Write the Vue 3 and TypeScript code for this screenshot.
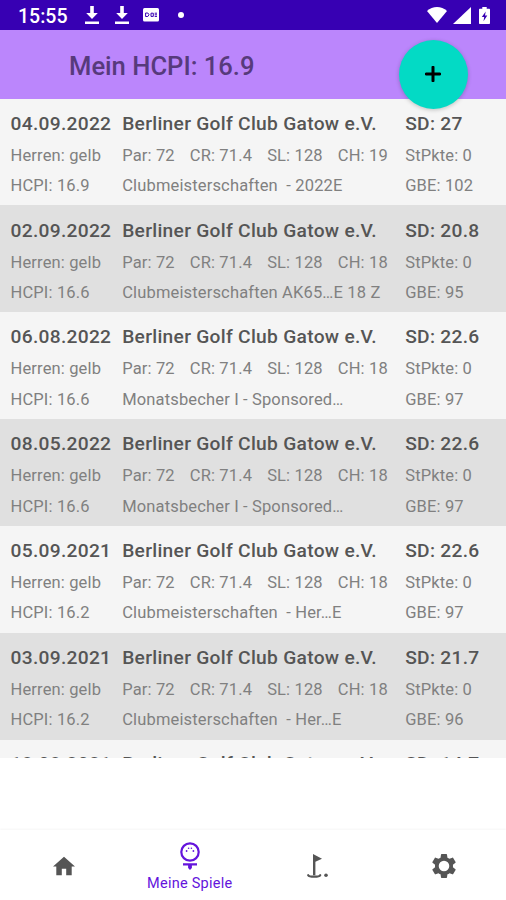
<script setup lang="ts">
interface Game {
  date: string
  hcpi: string
  ch: string
  event: string
  sd: string
  gbe: string
}

const games: Game[] = [
  { date: '04.09.2022', hcpi: '16.9', ch: '19', event: 'Clubmeisterschaften  - 2022E', sd: '27', gbe: '102' },
  { date: '02.09.2022', hcpi: '16.6', ch: '18', event: 'Clubmeisterschaften AK65…E 18 Z', sd: '20.8', gbe: '95' },
  { date: '06.08.2022', hcpi: '16.6', ch: '18', event: 'Monatsbecher I - Sponsored…', sd: '22.6', gbe: '97' },
  { date: '08.05.2022', hcpi: '16.6', ch: '18', event: 'Monatsbecher I - Sponsored…', sd: '22.6', gbe: '97' },
  { date: '05.09.2021', hcpi: '16.2', ch: '18', event: 'Clubmeisterschaften  - Her…E', sd: '22.6', gbe: '97' },
  { date: '03.09.2021', hcpi: '16.2', ch: '18', event: 'Clubmeisterschaften  - Her…E', sd: '21.7', gbe: '96' },
]
const next = { date: '18.08.2021', sd: '14.7' }
</script>

<template>
  <div class="screen">
    <div class="status">
      <span class="clock">15:55</span>
      <svg class="dl" viewBox="0 0 14 18"><path d="M5.2 0h3.6v7h4L7 13 1.2 7h4zM0 15.5h14V18H0z" /></svg>
      <svg class="dl second" viewBox="0 0 14 18"><path d="M5.2 0h3.6v7h4L7 13 1.2 7h4zM0 15.5h14V18H0z" /></svg>
      <svg class="card" viewBox="0 0 16 14">
        <rect width="16" height="13.5" rx="1.5" />
        <path class="cut" d="M2.6 5h2.2l1.2 1.7-1.2 1.8H2.6zM8 5.2h2.3v3.2H8zM11.7 5.2H14M11.7 6.8H14M11.7 8.4H14" />
      </svg>
      <span class="dot"></span>
      <span class="grow"></span>
      <svg class="wifi" viewBox="0 0 20 16"><path d="M0 4C5.5-1.2 14.5-1.2 20 4L10 16z" /></svg>
      <svg class="signal" viewBox="0 0 18 17"><path d="M18 0v17H0z" /></svg>
      <svg class="battery" viewBox="0 0 11 17">
        <path d="M3.3 0h4.4v1.8H10c.6 0 1 .4 1 1V16c0 .6-.4 1-1 1H1c-.6 0-1-.4-1-1V2.8c0-.6.4-1 1-1h2.3z" />
        <path class="bolt" d="M6.7 4.5L2.8 10h2.4l-.7 4.2L8.3 8.5H6z" />
      </svg>
    </div>

    <header class="bar">
      <h1>Mein HCPI: 16.9</h1>
      <button class="fab" aria-label="Neu">
        <svg viewBox="0 0 16 16"><path d="M8 1.2v13.6M1.2 8h13.6" /></svg>
      </button>
    </header>

    <main class="list">
      <section v-for="g in games" :key="g.date" class="game">
        <div class="title">{{ g.date }}</div>
        <div class="title">Berliner Golf Club Gatow e.V.</div>
        <div class="title">SD: {{ g.sd }}</div>
        <div class="small">Herren: gelb</div>
        <div class="small values">
          <span>Par: 72</span><span>CR: 71.4</span><span>SL: 128</span><span>CH: {{ g.ch }}</span>
        </div>
        <div class="small">StPkte: 0</div>
        <div class="small">HCPI: {{ g.hcpi }}</div>
        <div class="small">{{ g.event }}</div>
        <div class="small">GBE: {{ g.gbe }}</div>
      </section>
      <section class="game upcoming">
        <div class="title">{{ next.date }}</div>
        <div class="title">Berliner Golf Club Gatow e.V.</div>
        <div class="title">SD: {{ next.sd }}</div>
      </section>
    </main>

    <nav class="tabs">
      <a class="tab">
        <svg class="home" viewBox="2 3 20 17"><path d="M10 20v-6h4v6h5v-8h3L12 3 2 12h3v8z" /></svg>
      </a>
      <a class="tab active">
        <svg class="ball" viewBox="0 0 20 28">
          <circle class="ring" cx="10" cy="10" r="8.7" />
          <circle cx="6.6" cy="9" r=".9" /><circle cx="8.6" cy="6.3" r=".8" /><circle cx="11.4" cy="6.3" r=".8" /><circle cx="13.4" cy="9" r=".9" />
          <path d="M3 21.3h14v2.1h-5.1V26L10 28l-1.9-2v-2.6H3z" />
        </svg>
        <span>Meine Spiele</span>
      </a>
      <a class="tab">
        <svg class="flag" viewBox="0 0 22 25">
          <path d="M6 0L15 4.7 8.4 7.8v13.4H6z" />
          <path class="ground" d="M1.2 21.2c.8 1.4 3 1.5 6 1.5s5.2-.1 6-1.5" />
          <circle cx="19" cy="21.2" r="1.8" />
        </svg>
      </a>
      <a class="tab">
        <svg class="gear" viewBox="2 2 20 20"><path d="M19.43 12.98c.04-.32.07-.64.07-.98s-.03-.66-.07-.98l2.11-1.65c.19-.15.24-.42.12-.64l-2-3.46c-.12-.22-.39-.3-.61-.22l-2.49 1c-.52-.4-1.08-.73-1.69-.98l-.38-2.65C14.46 2.18 14.25 2 14 2h-4c-.25 0-.46.18-.49.42l-.38 2.65c-.61.25-1.17.59-1.69.98l-2.49-1c-.23-.09-.49 0-.61.22l-2 3.46c-.13.22-.07.49.12.64l2.11 1.65c-.04.32-.07.65-.07.98s.03.66.07.98l-2.11 1.65c-.19.15-.24.42-.12.64l2 3.46c.12.22.39.3.61.22l2.49-1c.52.4 1.08.73 1.69.98l.38 2.65c.03.24.24.42.49.42h4c.25 0 .46-.18.49-.42l.38-2.65c.61-.25 1.17-.59 1.69-.98l2.49 1c.23.09.49 0 .61-.22l2-3.46c.12-.22.07-.49-.12-.64zM12 16.4a4.4 4.4 0 1 1 0-8.8 4.4 4.4 0 0 1 0 8.8z" /></svg>
      </a>
    </nav>
  </div>
</template>

<style>
body { background: #fff; }
</style>

<style scoped>
.screen {
  width: 506px;
  height: 900px;
  display: flex;
  flex-direction: column;
  overflow: hidden;
  background: #fff;
  font-family: Roboto, "Liberation Sans", sans-serif;
}
.screen svg { display: block; flex: none; fill: currentColor; }
.status {
  flex: none;
  height: 30px;
  box-sizing: border-box;
  padding: 0 16px 0 18px;
  display: flex;
  align-items: center;
  background: #3700b3;
  color: #fff;
}
.clock { width: 67px; font-size: 19.5px; font-weight: 500; line-height: 28px; padding-top: 3px; }
.dl { width: 14px; height: 18px; }
.second { margin-left: 16px; }
.card { width: 16px; height: 14px; margin-left: 14px; }
.card .cut { fill: none; stroke: #3700b3; stroke-width: 1; }
.dot { width: 6px; height: 6px; border-radius: 50%; margin-left: 19px; background: #fff; }
.grow { flex: 1; }
.wifi { width: 20px; height: 16px; }
.signal { width: 18px; height: 17px; margin-left: 6px; }
.battery { width: 11px; height: 17px; margin-left: 8px; }
.battery .bolt { fill: #3700b3; }
.bar {
  flex: none;
  height: 68.5px;
  box-sizing: border-box;
  padding: 0 38.5px 0 69px;
  display: flex;
  justify-content: space-between;
  align-items: flex-start;
  background: #bb86fc;
  z-index: 1;
}
h1 { margin: 0; color: #573a7c; font-size: 25.6px; font-weight: 500; line-height: 72px; }
.fab {
  width: 69px;
  height: 69px;
  margin-top: 9.5px;
  padding: 0;
  border: 0;
  border-radius: 50%;
  display: flex;
  align-items: center;
  justify-content: center;
  background: #03dac5;
  color: #000;
  box-shadow: 0 1px 4px rgba(0, 0, 0, 0.22);
}
.fab svg { width: 16px; height: 16px; fill: none; stroke: #000; stroke-width: 3; stroke-linecap: round; }
.list { flex: none; height: 659.5px; overflow: hidden; }
.game {
  height: 106.9px;
  box-sizing: border-box;
  padding: 9.2px 0 0 10.5px;
  display: grid;
  grid-template-columns: 111.7px 283px 1fr;
  grid-template-rows: 32px 30.2px 30px;
  background: #f5f5f5;
  white-space: pre;
}
.game:nth-child(even) { background: #e0e0e0; }
.upcoming { padding-top: 7.8px; }
.title { font-size: 19.2px; font-weight: 500; line-height: 32px; color: #555; letter-spacing: 0.29px; }
.small { font-size: 16.5px; line-height: 31px; color: #808080; letter-spacing: 0.15px; }
.values { display: flex; gap: 15px; }
.tabs {
  flex: none;
  height: 70px;
  margin-top: 72px;
  display: grid;
  grid-template-columns: repeat(4, 1fr);
  background: #fff;
  box-shadow: 0 -1px 2px rgba(0, 0, 0, 0.04);
  color: #555;
}
.tab { display: flex; flex-direction: column; align-items: center; }
.active { color: #6414dc; }
.active span { font-size: 14.5px; line-height: 20px; margin-top: 4px; letter-spacing: 0.25px; }
.home { width: 22px; height: 20px; margin: 26px 0 0 1px; }
.ball { width: 20px; height: 28px; margin-top: 12px; }
.ball .ring { fill: none; stroke: currentColor; stroke-width: 2.2; }
.flag { width: 22px; height: 25px; margin: 24px 0 0 4px; }
.flag .ground { fill: none; stroke: currentColor; stroke-width: 2.2; stroke-linecap: round; }
.gear { width: 24px; height: 24px; margin: 24px 0 0 2px; }
</style>
